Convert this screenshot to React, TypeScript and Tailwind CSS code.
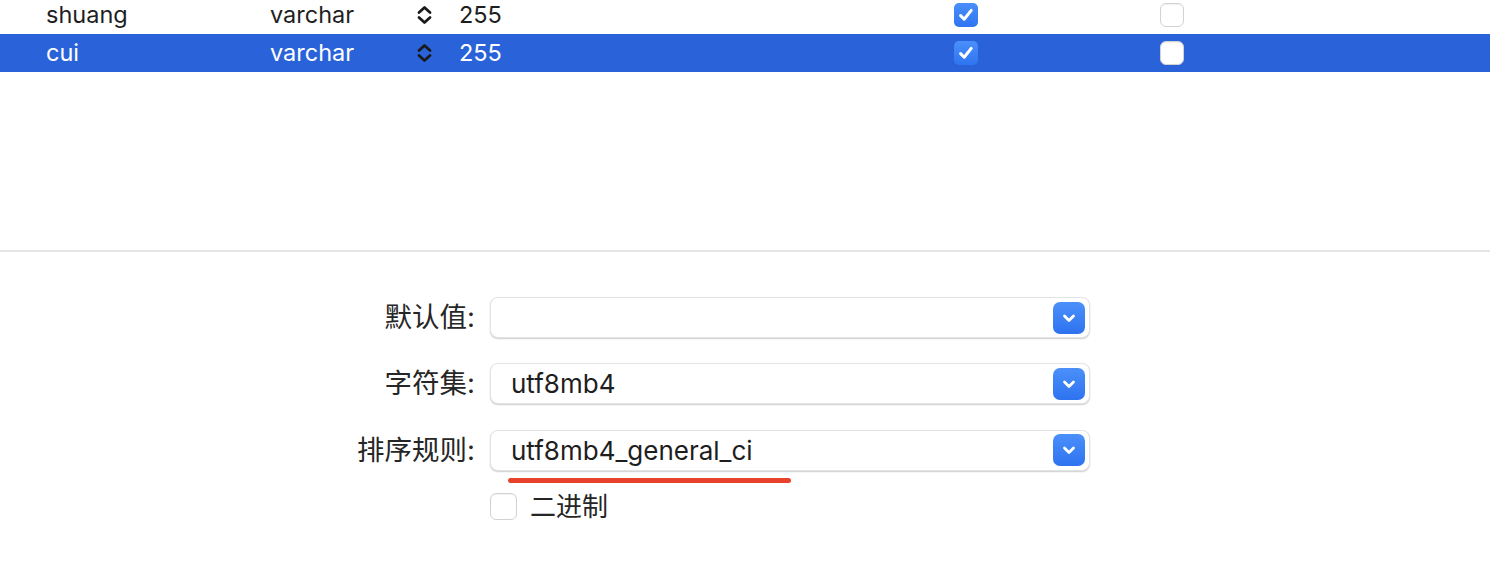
import type { ReactNode } from "react";

const latin = "font-['Inter','Noto_Sans_CJK_SC',sans-serif]";

const rows = [
  { name: "shuang", type: "varchar", length: "255", notNull: true, key: false, selected: false },
  { name: "cui", type: "varchar", length: "255", notNull: true, key: false, selected: true },
];

function Stepper() {
  return (
    <svg width="17" height="20" viewBox="0 0 17 20" fill="none" stroke="#1a1a1a" strokeWidth="2.8" strokeLinecap="round" strokeLinejoin="round">
      <path d="M3 7.5 L8.5 2.5 L14 7.5" />
      <path d="M3 12.5 L8.5 17.5 L14 12.5" />
    </svg>
  );
}

function CheckBox({ checked, size = "h-6 w-6" }: { checked: boolean; size?: string }) {
  if (checked) {
    return (
      <span className={`flex ${size} items-center justify-center rounded-[5px] bg-gradient-to-b from-[#4a8ff9] to-[#2f74f1]`}>
        <svg width="18" height="18" viewBox="0 0 18 18" fill="none" stroke="white" strokeWidth="3" strokeLinecap="round" strokeLinejoin="round">
          <path d="M3.6 9.6 L7.2 13.2 L14.2 4.4" />
        </svg>
      </span>
    );
  }
  return (
    <span className={`block ${size} rounded-[6px] border border-[#d2d2d2] bg-white shadow-[inset_0_1px_1px_rgba(0,0,0,0.06)]`} />
  );
}

function Select({ value, children }: { value?: string; children?: ReactNode }) {
  return (
    <div className="flex h-[41px] w-[600px] items-center justify-between rounded-[8px] border border-[#e3e3e3] bg-white pl-[20px] pr-[4px] shadow-[0_1px_1.5px_rgba(0,0,0,0.2)]">
      <span className="text-[26px] text-[#1e1e1e]">{value}</span>
      <span className="flex h-8 w-8 items-center justify-center rounded-[7px] bg-gradient-to-b from-[#4b90f9] to-[#2e72f0]">
        <svg width="16" height="16" viewBox="0 0 16 16" fill="none" stroke="white" strokeWidth="2.8" strokeLinecap="round" strokeLinejoin="round">
          <path d="M3.5 6 L8 10.5 L12.5 6" />
        </svg>
      </span>
      {children}
    </div>
  );
}

export default function App() {
  return (
    <div className={`h-[566px] w-[1490px] overflow-hidden bg-white ${latin}`}>
      <div className="-mt-[4px] h-[254px]">
        {rows.map((row) => (
          <div
            key={row.name}
            className={`flex h-[38px] items-center text-[23.5px] ${row.selected ? "bg-[#2a63d9] text-white" : "text-[#1e1e1e]"}`}
          >
            <span className="w-[270px] pl-[46px]">{row.name}</span>
            <span className="w-[146px]">{row.type}</span>
            <span className="flex w-[43px] items-center">
              <Stepper />
            </span>
            <span className="w-[495px]">{row.length}</span>
            <span className="flex w-[206px]">
              <CheckBox checked={row.notNull} />
            </span>
            <span className="flex">
              <CheckBox checked={row.key} />
            </span>
          </div>
        ))}
      </div>

      <div className="h-[2px] bg-[#e5e5e5]" />

      <div className="mt-[45px] grid grid-cols-[475px_600px] items-center gap-x-[15px] gap-y-[25px] text-[26px] text-[#262626]">
        <span className="text-right text-[27.5px]">默认值:</span>
        <Select />
        <span className="text-right text-[27.5px]">字符集:</span>
        <Select value="utf8mb4" />
        <span className="text-right text-[27.5px]">排序规则:</span>
        <div className="relative">
          <Select value="utf8mb4_general_ci" />
          <span className="absolute left-[18px] top-[48px] h-[5px] w-[283px] rounded-full bg-[#e8412c]" />
        </div>
        <span />
        <label className="-mt-[9px] flex items-center gap-[13px]">
          <CheckBox checked={false} size="h-[27px] w-[27px]" />
          <span>二进制</span>
        </label>
      </div>
    </div>
  );
}
